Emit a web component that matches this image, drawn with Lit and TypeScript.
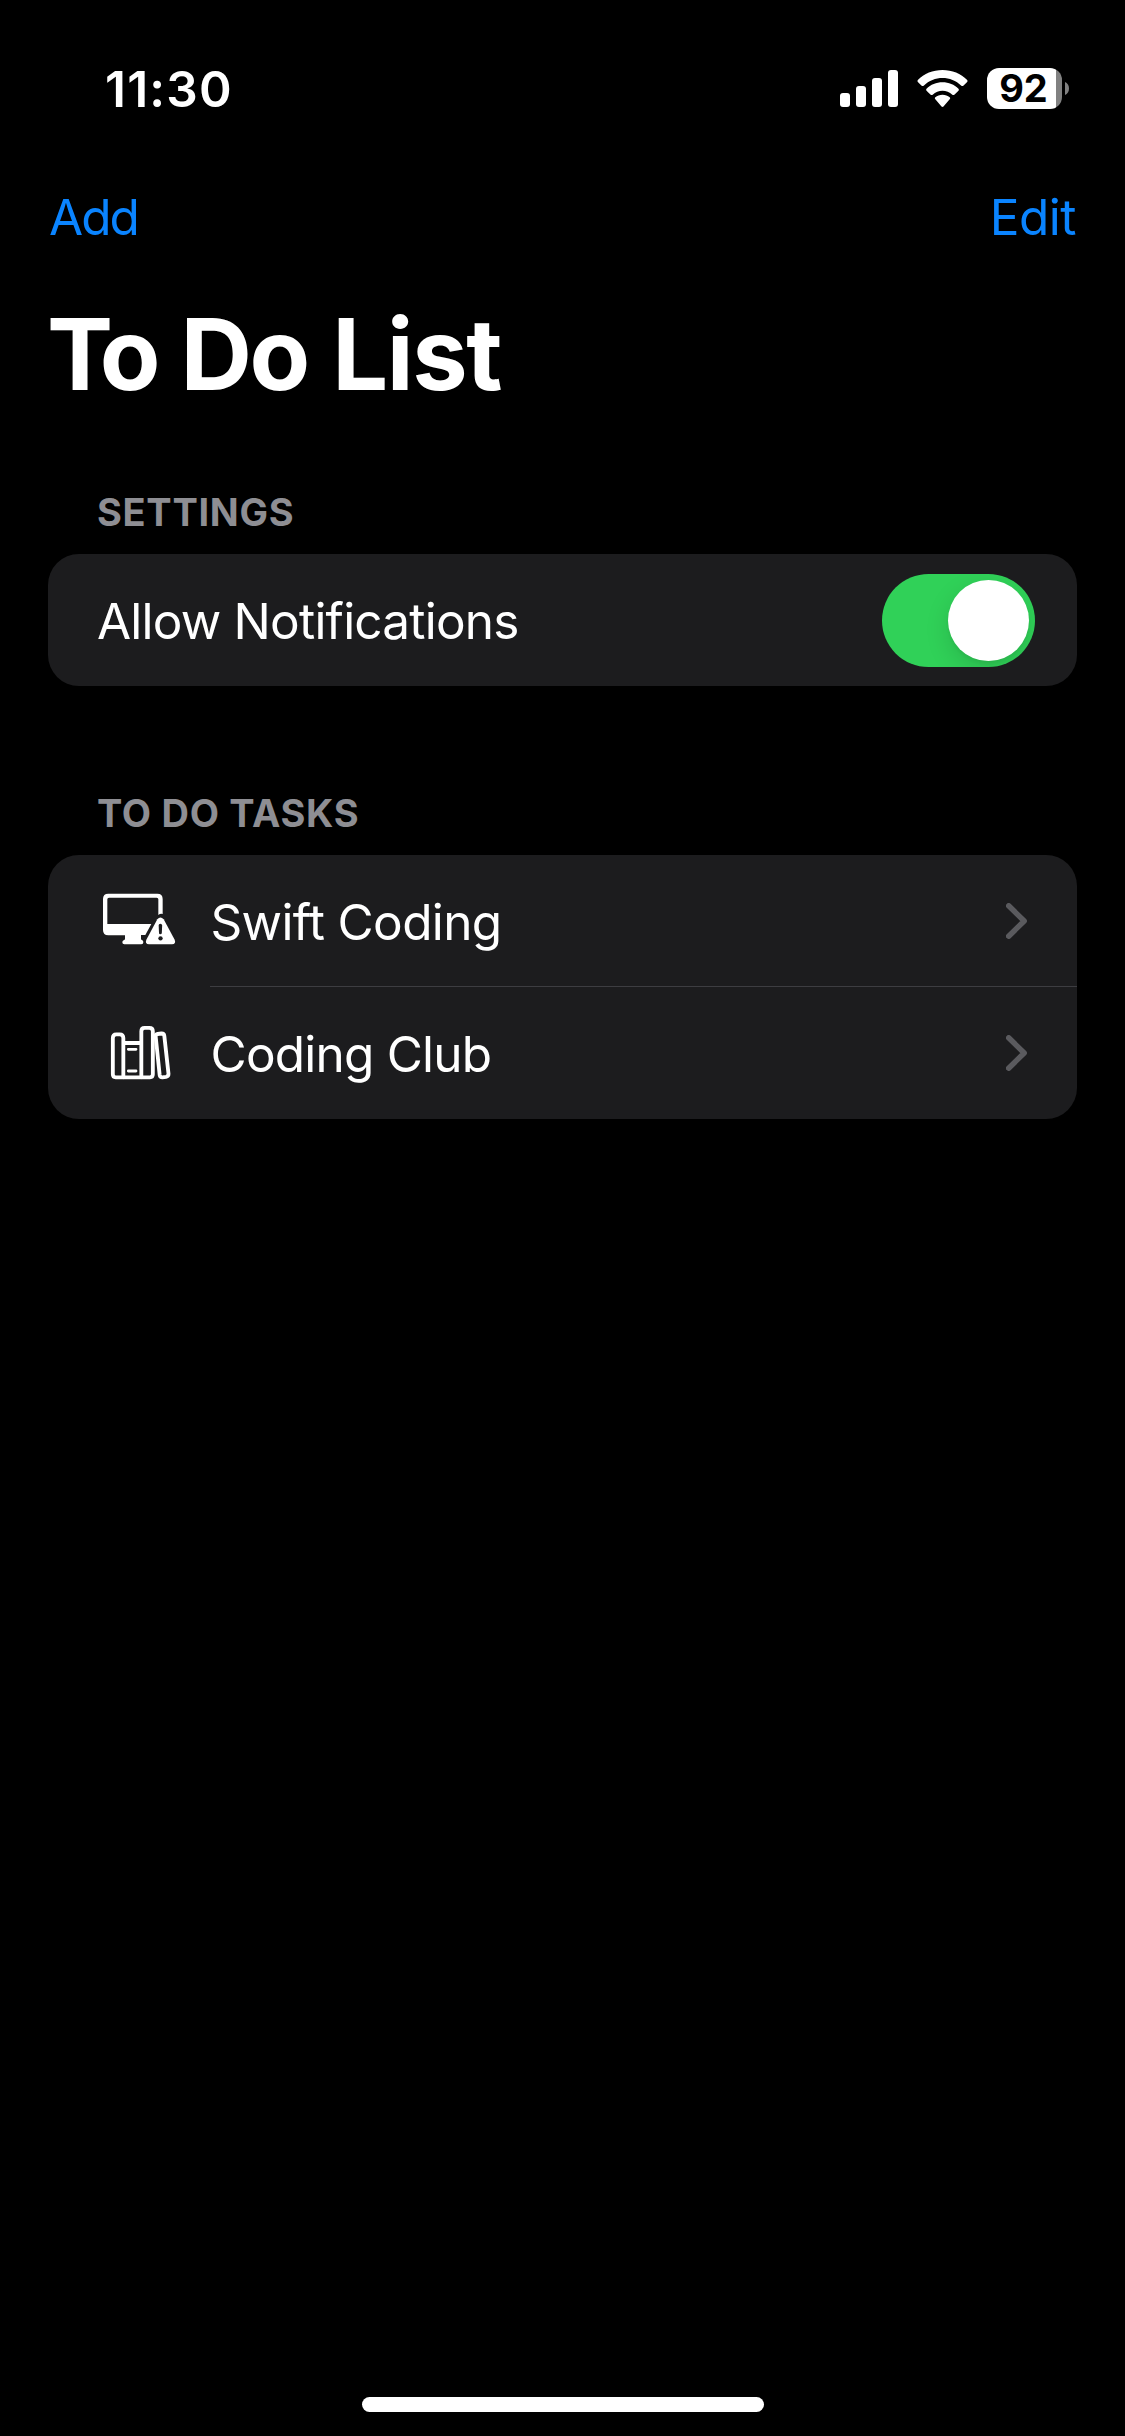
import { LitElement, html, css, svg } from "lit";
import { customElement, property, state } from "lit/decorators.js";
import { classMap } from "lit/directives/class-map.js";

@customElement("status-bar")
export class StatusBar extends LitElement {
  static styles = css`
    :host {
      display: flex;
      align-items: center;
      justify-content: space-between;
      height: 177px;
      padding: 0 56px 0 105px;
    }
    .time {
      font-size: 49.5px;
      font-weight: 600;
      letter-spacing: 1.2px;
      line-height: 60px;
      padding-top: 1px;
    }
    .indicators {
      display: flex;
      align-items: center;
    }
    .signal {
      display: block;
      width: 58px;
      height: 37px;
      margin-right: 19px;
    }
    .wifi {
      display: block;
      width: 51px;
      height: 37px;
      margin-right: 19px;
    }
    .battery {
      display: flex;
      align-items: center;
      justify-content: center;
      width: 75px;
      height: 41px;
      border-radius: 12px;
      background: linear-gradient(90deg, #fff 69px, #818181 69px);
      color: #000;
      font-size: 38px;
      font-weight: 700;
      line-height: 41px;
    }
    .level {
      padding-right: 2px;
    }
    .tip {
      display: block;
      width: 4px;
      height: 13px;
      margin-left: 3px;
    }
  `;

  render() {
    return html`
      <div class="time">11:30</div>
      <div class="indicators">
        <svg class="signal" viewBox="60 60 174 111" fill="#fff">
          <rect x="60" y="129" width="30" height="42" rx="9" />
          <rect x="108" y="108" width="30" height="63" rx="9" />
          <rect x="156" y="84" width="30" height="87" rx="9" />
          <rect x="204" y="60" width="30" height="111" rx="9" />
        </svg>
        <svg class="wifi" viewBox="291 60 153 111" fill="#fff">
          <path d="M367.500 60C396 60 423 71 441.500 90Q444 93 441.500 96L430 107Q427 109.500 424 107C408 92 388 84 367.500 84S327 92 311 107Q308 109.500 305 107L293.500 96Q291 93 293.500 90C312 71 339 60 367.500 60Z" />
          <path d="M367.500 97C386 97 403 104 415.500 116Q418 119 415.500 122L403 134Q400 136.500 397 134C389 126 378 122 367.500 122S346 126 338 134Q335 136.500 332 134L319.500 122Q317 119 319.500 116C332 104 349 97 367.500 97Z" />
          <path d="M367.500 134C376 134 383.500 137 389 142Q392 145 389 148L370.500 169.500Q367.500 172 364.500 169.500L346 148Q343 145 346 142C351.500 137 359 134 367.500 134Z" />
        </svg>
        <div class="battery"><span class="level">92</span></div>
        <svg class="tip" viewBox="0 0 4 13" fill="#818181">
          <path d="M0 0C2.500 1 4 3.500 4 6.500S2.500 12 0 13Z" />
        </svg>
      </div>
    `;
  }
}

@customElement("toggle-switch")
export class ToggleSwitch extends LitElement {
  static styles = css`
    :host {
      display: block;
    }
    .track {
      display: flex;
      box-sizing: border-box;
      width: 153px;
      height: 93px;
      padding: 6px;
      border-radius: 47px;
      background: #39393d;
      overflow: hidden;
    }
    .on {
      justify-content: flex-end;
      background: #30d158;
    }
    .knob {
      width: 81px;
      height: 81px;
      border-radius: 50%;
      background: #fff;
      box-shadow: 0 9px 24px rgba(0, 0, 0, 0.13), 0 3px 3px rgba(0, 0, 0, 0.04);
    }
  `;

  @property({ type: Boolean }) checked = false;

  render() {
    return html`<div class=${classMap({ track: true, on: this.checked })}>
      <div class="knob"></div>
    </div>`;
  }
}

const monitorIcon = svg`
  <svg class="glyph" viewBox="60 63 240 180">
    <path fill="#fff" fill-rule="evenodd" d="M85 71H232Q248 71 248 87V132Q241 130 235 135V88Q235 83 230 83H87Q82 83 82 88V162H214L196 195H183V206Q183 210 187 211Q190 213 190 217Q190 223 184 223H133Q127 223 127 217Q127 213 131 211Q135 210 135 206V196H85Q69 196 69 180V87Q69 71 85 71Z"/>
    <path fill="#fff" d="M232 148Q241 137 251 148L284 209Q289 222 276 223H207Q194 222 199 209Z"/>
    <path fill="#1c1c1e" d="M236 166Q236 161 241 161T246.500 166L245.500 189Q245 193 241 193T237 189Z"/>
    <circle fill="#1c1c1e" cx="241.500" cy="205" r="6.500"/>
  </svg>`;

const booksIcon = svg`
  <svg class="glyph" viewBox="60 459 240 180" fill="none" stroke="#fff" stroke-width="11.500" stroke-linejoin="round">
    <path d="M130 622H107Q98.500 622 98.500 613V504Q98.500 493 109 493H119Q130 493 130 504Z"/>
    <path d="M130 519H184M130 622H184"/>
    <path d="M184 622V484Q184 473.500 194 473.500H208Q218.500 473.500 218.500 484V613Q218.500 622 210 622Z"/>
    <path d="M227 499Q227 493 233 492L244 490.500Q252 490 253 498L265.500 611Q266 619 258 620.500L247 622Q240 622 239 615Z"/>
    <path stroke-width="8.500" stroke-linecap="round" d="M145 538H168M145 603H168"/>
  </svg>`;

interface Task {
  title: string;
  icon: unknown;
  className: string;
}

@customElement("app-root")
export class AppRoot extends LitElement {
  static styles = css`
    :host {
      display: flex;
      flex-direction: column;
      box-sizing: border-box;
      height: 2436px;
      background: #000;
      color: #fff;
      font-family: Inter, "Liberation Sans", sans-serif;
      font-kerning: normal;
    }
    .toolbar {
      display: flex;
      align-items: center;
      justify-content: space-between;
      height: 79px;
      padding: 0 49px 0 49px;
      color: #0a84ff;
      font-size: 49.5px;
      line-height: 60px;
    }
    .add {
      letter-spacing: -2px;
    }
    .edit {
      letter-spacing: -0.5px;
    }
    .title {
      margin: 0;
      padding: 38px 47px 0;
      height: 177px;
      font-size: 99px;
      font-weight: 700;
      line-height: 120px;
      letter-spacing: -1px;
    }
    .first {
      letter-spacing: -5.5px;
    }
    .second {
      margin-left: 3px;
      letter-spacing: -2.5px;
    }
    .last {
      margin-left: 2px;
      letter-spacing: -1.4px;
    }
    .section + .section {
      margin-top: 86px;
    }
    .heading {
      margin: 0;
      padding-left: 97px;
      height: 83px;
      color: #8e8e93;
      font-size: 38px;
      font-weight: 700;
      line-height: 83px;
      letter-spacing: 0.7px;
    }
    .card {
      margin: 0 48px;
      border-radius: 31px;
      background: #1c1c1e;
      overflow: hidden;
    }
    .row {
      display: flex;
      align-items: center;
      height: 132px;
      font-size: 49.5px;
      line-height: 60px;
    }
    .label {
      padding-top: 2px;
    }
    .setting {
      justify-content: space-between;
      padding: 0 42px 0 49px;
      letter-spacing: -0.79px;
    }
    .glyph {
      display: block;
      flex: none;
      width: 80px;
      height: 60px;
      margin: 0 30px 0 52px;
    }
    .cell {
      display: flex;
      flex: 1;
      align-items: center;
      justify-content: space-between;
      box-sizing: border-box;
      height: 132px;
      padding: 0 50px 0 0.5px;
    }
    .row:not(:last-child) .cell {
      background: linear-gradient(#3d3d41, #3d3d41) 0 131px / 100% 1px no-repeat;
    }
    .swift {
      letter-spacing: -0.65px;
    }
    .club {
      letter-spacing: -0.78px;
    }
    .chevron {
      display: block;
      width: 21px;
      height: 36px;
    }
    .footer {
      display: flex;
      justify-content: center;
      margin-top: auto;
      padding: 0 0 24px;
    }
    .home {
      width: 402px;
      height: 15px;
      border-radius: 8px;
      background: #fff;
    }
  `;

  @state() private tasks: Task[] = [
    { title: "Swift Coding", icon: monitorIcon, className: "swift" },
    { title: "Coding Club", icon: booksIcon, className: "club" },
  ];

  render() {
    return html`
      <status-bar></status-bar>
      <nav class="toolbar">
        <span class="add">Add</span>
        <span class="edit">Edit</span>
      </nav>
      <h1 class="title"><span class="first">To</span> <span class="second">Do</span> <span class="last">List</span></h1>
      <section class="section">
        <h2 class="heading">SETTINGS</h2>
        <div class="card">
          <div class="row setting">
            <span class="label">Allow Notifications</span>
            <toggle-switch checked></toggle-switch>
          </div>
        </div>
      </section>
      <section class="section">
        <h2 class="heading">TO DO TASKS</h2>
        <div class="card">
          ${this.tasks.map(
            (task) => html`<div class="row">
              ${task.icon}
              <div class="cell">
                <span class="label ${task.className}">${task.title}</span>
                <svg class="chevron" viewBox="198 189 63 108">
                  <path d="M206 197.500L252.500 243L206 288.500" fill="none" stroke="#5a5a5e" stroke-width="16.500" stroke-linecap="round" stroke-linejoin="round" />
                </svg>
              </div>
            </div>`
          )}
        </div>
      </section>
      <div class="footer"><div class="home"></div></div>
    `;
  }
}
